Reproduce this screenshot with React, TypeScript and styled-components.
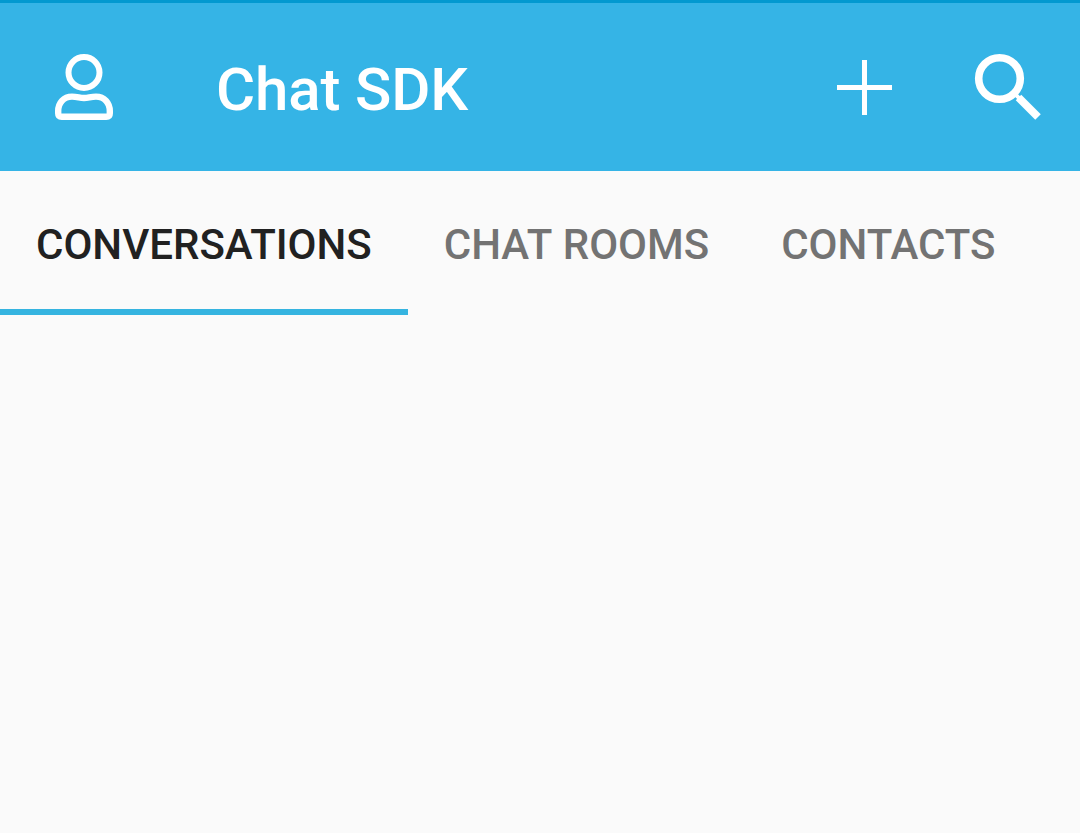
import React from "react";
import styled, { createGlobalStyle } from "styled-components";

const GlobalStyle = createGlobalStyle`
  * { box-sizing: border-box; }
  body { margin: 0; background: #fafafa; font-family: Roboto, sans-serif; }
`;
const Screen = styled.div`
  width: 1080px;
  height: 833px;
  background: #fafafa;
  overflow: hidden;
`;
const StatusEdge = styled.div`
  height: 3px;
  background: #0299d0;
`;
const Toolbar = styled.header`
  height: 168px;
  display: flex;
  align-items: center;
  padding: 0 37px 0 48px;
  background: #35b4e6;
  color: #fff;
`;
const IconButton = styled.button`
  width: 72px;
  height: 72px;
  padding: 0;
  border: 0;
  background: none;
  color: inherit;
  svg { display: block; }
`;
const Title = styled.h1`
  flex: 1;
  margin: 0 0 0 96px;
  padding-top: 5px;
  font-size: 60px;
  line-height: 72px;
  font-weight: 500;
  letter-spacing: -0.15px;
  white-space: nowrap;
`;
const Actions = styled.div`
  display: flex;
  gap: 71px;
`;
const Tabs = styled.nav`
  display: flex;
  height: 144px;
`;
const Tab = styled.button<{ $active?: boolean }>`
  height: 144px;
  padding: 10px 36px 0;
  border: 0;
  border-bottom: 6px solid ${(p) => (p.$active ? "#35b4e0" : "transparent")};
  background: none;
  color: ${(p) => (p.$active ? "#212121" : "#737373")};
  font: 500 42px/50px Roboto, sans-serif;
  word-spacing: 1px;
  white-space: nowrap;
`;

export default function App() {
  return (
    <Screen>
      <GlobalStyle />
      <StatusEdge />
      <Toolbar>
        <IconButton aria-label="Profile">
          <svg width="72" height="72" viewBox="48 51 72 72" fill="none" stroke="currentColor">
            <circle cx="84" cy="72.500" r="15.500" strokeWidth="6" />
            <path strokeWidth="6.400" d="M84 98C79.500 98 77.500 96.600 72 96.600C63.500 96.600 58.200 103 58.200 111V113.300Q58.200 116.800 61.700 116.800H106.300Q109.800 116.800 109.800 113.300V111C109.800 103 104.500 96.600 96 96.600C90.500 96.600 88.500 98 84 98Z" />
          </svg>
        </IconButton>
        <Title>Chat SDK</Title>
        <Actions>
          <IconButton aria-label="Add">
            <svg width="72" height="72" viewBox="828 51 72 72" stroke="currentColor" strokeWidth="5">
              <path d="M837 87.500H892M864.500 60V115" />
            </svg>
          </IconButton>
          <IconButton aria-label="Search">
            <svg width="72" height="72" viewBox="971 51 72 72" fill="none" stroke="currentColor">
              <circle cx="999.500" cy="78.500" r="20.800" strokeWidth="7.600" />
              <path d="M1018.500 97.500L1038 117" strokeWidth="7.800" />
              <path d="M1014 93L1021 100" strokeWidth="4" />
            </svg>
          </IconButton>
        </Actions>
      </Toolbar>
      <Tabs>
        <Tab $active>CONVERSATIONS</Tab>
        <Tab>CHAT ROOMS</Tab>
        <Tab>CONTACTS</Tab>
      </Tabs>
    </Screen>
  );
}
